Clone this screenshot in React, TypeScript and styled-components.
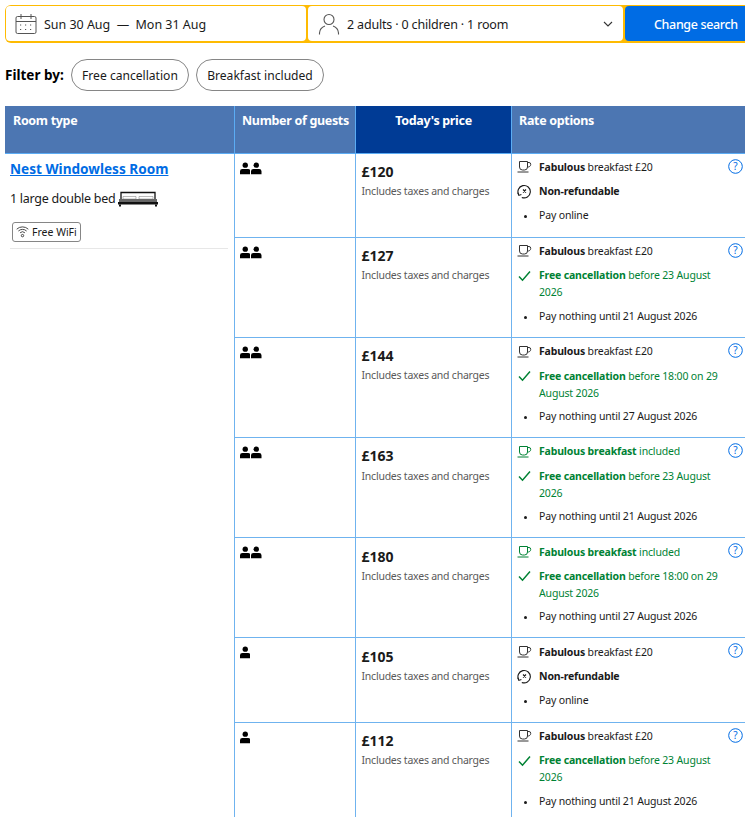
import React from "react";
import styled, { createGlobalStyle } from "styled-components";

const Global = createGlobalStyle`
  html, body { margin: 0; padding: 0; background: #fff; overflow: hidden; height: 817px; width: 745px; }
  body { font-family: "Noto Sans", "Open Sans", "Liberation Sans", sans-serif; color: #1a1a1a; }
`;

const Page = styled.div`
  width: 745px;
  height: 817px;
  overflow: hidden;
  padding: 5px 0 0 5px;
  box-sizing: border-box;
`;

const SearchBar = styled.div`
  display: flex;
  width: 760px;
  height: 38px;
  background: #febb02;
  border-radius: 6px;
  padding: 1px 0 2px 1px;
  box-sizing: border-box;
  gap: 2px;
`;

const Field = styled.div<{ $w: number }>`
  width: ${(p) => p.$w}px;
  flex: none;
  background: #fff;
  border-radius: 4px;
  display: flex;
  align-items: center;
  box-sizing: border-box;
  font-size: 12.5px;
  color: #1a1a1a;
`;

const DateText = styled.span<{ $tight?: boolean }>`
  margin-left: 7px;
  padding-top: 1px;
  white-space: pre;
  letter-spacing: ${(p) => (p.$tight ? "-0.17px" : "-0.03px")};
`;

const Chevron = styled.svg`
  margin-left: auto;
  margin-right: 10px;
`;

const SearchButton = styled.div`
  flex: 1;
  background: #006ce4;
  color: #fff;
  font-size: 12.5px;
  font-weight: 500;
  letter-spacing: -0.35px;
  border-radius: 4px 0 0 4px;
  display: flex;
  align-items: center;
  padding: 1px 0 0 29px;
`;

const FilterRow = styled.div`
  display: flex;
  align-items: center;
  margin-top: 16px;
  height: 32px;
`;

const FilterLabel = styled.span`
  font-size: 13.5px;
  font-weight: 700;
  color: #000;
  width: 66px;
`;

const Pill = styled.span<{ $w: number }>`
  width: ${(p) => p.$w}px;
  height: 32px;
  box-sizing: border-box;
  border: 1px solid #868686;
  border-radius: 16px;
  display: flex;
  align-items: center;
  justify-content: center;
  font-size: 12.1px;
  margin-right: 7px;
`;

const Table = styled.table`
  margin-top: 15px;
  width: 760px;
  table-layout: fixed;
  border-collapse: collapse;
`;

const Th = styled.th<{ $dark?: boolean; $center?: boolean }>`
  background: ${(p) => (p.$dark ? "#003b95" : "#4c76b2")};
  color: #fff;
  font-size: 12.5px;
  font-weight: 700;
  letter-spacing: -0.32px;
  text-align: ${(p) => (p.$center ? "center" : "left")};
  vertical-align: top;
  padding: 6px 6.5px 6px 7.5px;
  height: 47px;
  box-sizing: border-box;
  border: 1px solid #5bacf4;
  border-top: none;
  line-height: 17px;
  white-space: nowrap;
  &:first-child { border-left: none; padding-left: 8px; }
`;

const Tr = styled.tr<{ $h: number }>`
  height: ${(p) => p.$h}px;
`;

const Td = styled.td`
  border: 1px solid #6fb3ef;
  vertical-align: top;
  padding: 0;
  box-sizing: border-box;
`;

const RoomCell = styled(Td)`
  border-left: none;
  border-bottom: none;
  padding: 6px 6px 0 5px;
`;

const RoomName = styled.a`
  display: block;
  color: #006ce4;
  font-size: 13.6px;
  font-weight: 700;
  text-decoration: underline;
  line-height: 18px;
`;

const BedLine = styled.div`
  display: flex;
  align-items: center;
  font-size: 12.5px;
  letter-spacing: -0.27px;
  margin-top: 12px;
  height: 18px;
  gap: 3px;
`;

const Chip = styled.span`
  display: inline-flex;
  align-items: center;
  gap: 3px;
  margin: 14px 0 0 2px;
  width: 69px;
  height: 20px;
  box-sizing: border-box;
  border: 1px solid #868686;
  border-radius: 3px;
  font-size: 10.5px;
  padding-left: 3px;
`;

const Rule = styled.div`
  border-bottom: 1px solid #e7e7e7;
  margin-top: 5px;
`;

const GuestCell = styled(Td)`
  padding: 8px 0 0 5px;
`;

const GuestIcons = styled.div`
  display: flex;
  gap: 1px;
`;

const PriceCell = styled(Td)<{ $o: number }>`
  padding: ${(p) => 8.4 + p.$o}px 0 0 6px;
`;

const Price = styled.div`
  font-size: 14px;
  font-weight: 700;
  line-height: 19px;
  color: #1a1a1a;
`;

const PriceNote = styled.div`
  font-size: 10.5px;
  letter-spacing: -0.23px;
  color: #595959;
  line-height: 15px;
  margin-top: 3.2px;
`;

const RateCell = styled(Td)<{ $o: number }>`
  position: relative;
  padding: ${(p) => 5.35 + p.$o}px 0 0 5px;
`;

const Help = styled.svg`
  position: absolute;
  top: 5px;
  left: 216px;
`;

const RateLine = styled.div<{ $green?: boolean }>`
  display: flex;
  font-size: 10.5px;
  letter-spacing: -0.16px;
  line-height: 17px;
  margin-bottom: 7.45px;
  color: ${(p) => (p.$green ? "#008234" : "#1a1a1a")};
  width: 212px;
  b { font-weight: 700; }
  &:last-child { margin-top: -0.95px; }
`;

const RateIcon = styled.span`
  width: 22.5px;
  flex: none;
  display: flex;
  justify-content: flex-start;
  height: 17px;
  align-items: center;
`;

const Dot = styled.span`
  width: 3px;
  height: 3px;
  border-radius: 50%;
  background: #1a1a1a;
  margin: 2px 0 0 7px;
`;

const Cup = ({ c }: { c: string }) => (
  <svg width="15" height="14" viewBox="0 0 15 14" fill="none" stroke={c} strokeWidth="1">
    <path d="M2.5 1.5h8v5.5a3 3 0 0 1-3 3h-2a3 3 0 0 1-3-3z" />
    <path d="M10.5 2.5h1.5a1.7 1.7 0 0 1 1.7 1.7v.3a2.5 2.5 0 0 1-3.4 2.3" />
    <path d="M.5 12h11" />
  </svg>
);

const NonRefund = () => (
  <svg width="15" height="15" viewBox="0 0 15 15" fill="none" stroke="#1a1a1a" strokeWidth="1.1">
    <path d="M1.8 10.8A6.2 6.2 0 1 1 4.8 13.4" />
    <path d="M.8 8.6l1 2.8 2.6-1" />
    <path d="M6 5.5l3 3M9 5.5l-3 3" />
  </svg>
);

const Check = () => (
  <svg width="13" height="12" viewBox="0 0 13 12" fill="none" stroke="#008234" strokeWidth="1.5" style={{ marginLeft: 1 }}>
    <path d="M1 6.5l3.5 3.7L12 1.5" />
  </svg>
);

const Person = () => (
  <svg width="10.5" height="13" viewBox="0 0 11 13" fill="#000">
    <circle cx="5.5" cy="3" r="2.8" />
    <path d="M0 12.5V9.5A2.5 2.5 0 0 1 2.5 7h6A2.5 2.5 0 0 1 11 9.5v3z" />
  </svg>
);

const Bed = () => (
  <svg width="40" height="16" viewBox="0 0 40 16">
    <path d="M3 8V1.5h34V8" fill="none" stroke="#111" strokeWidth="1.3" />
    <path d="M5 5.5h13V8H5zM21 5.5h14V8H21z" fill="#fff" stroke="#555" strokeWidth=".4" />
    <path d="M1 8h38v3H1z" fill="#666" />
    <path d="M0 11h40v2.5H0z" fill="#111" />
    <path d="M1 13.5h2v2H1zM37 13.5h2v2h-2z" fill="#111" />
  </svg>
);

const Wifi = () => (
  <svg width="13" height="13" viewBox="0 0 13 13" fill="none" stroke="#333" strokeWidth=".9">
    <path d="M.7 4.2a8.4 8.4 0 0 1 11.6 0" />
    <path d="M2.4 6a6 6 0 0 1 8.2 0" />
    <path d="M4.1 7.8a3.5 3.5 0 0 1 4.8 0" />
    <circle cx="6.5" cy="10.6" r="1.2" />
  </svg>
);

const Calendar = () => (
  <svg width="22" height="22" viewBox="0 0 22 22" fill="none" stroke="#555" strokeWidth="1" style={{ marginLeft: 9 }}>
    <rect x="1" y="3.5" width="20" height="17" rx="1.5" />
    <path d="M1 8.5h20M6 1v5M16 1v5" />
    <path d="M5 12h2M10 12h2M15 12h2M5 16.5h2M10 16.5h2M15 16.5h2" strokeDasharray="1.2 .8" />
  </svg>
);

const User = () => (
  <svg width="22" height="22" viewBox="0 0 22 22" fill="none" stroke="#555" strokeWidth="1.1" style={{ marginLeft: 10 }}>
    <circle cx="11" cy="6.5" r="5" />
    <path d="M1.5 21.5v-1.5a8 8 0 0 1 5.5-7M20.5 21.5v-1.5a8 8 0 0 0-5.5-7" />
  </svg>
);

type Rate = {
  breakfast: boolean;
  cancel: "none" | string;
  pay: string;
};

type Row = {
  h: number;
  o: number;
  people: number;
  price: string;
  rate: Rate;
};

const d23 = "before 23 August 2026";
const d29 = "before 18:00 on 29 August 2026";
const p21 = "Pay nothing until 21 August 2026";
const p27 = "Pay nothing until 27 August 2026";

const rows: Row[] = [
  { h: 84, o: 0, people: 2, price: "£120", rate: { breakfast: false, cancel: "none", pay: "Pay online" } },
  { h: 100, o: 0.1, people: 2, price: "£127", rate: { breakfast: false, cancel: d23, pay: p21 } },
  { h: 100, o: 0.3, people: 2, price: "£144", rate: { breakfast: false, cancel: d29, pay: p27 } },
  { h: 100, o: 0.5, people: 2, price: "£163", rate: { breakfast: true, cancel: d23, pay: p21 } },
  { h: 100, o: 0.7, people: 2, price: "£180", rate: { breakfast: true, cancel: d29, pay: p27 } },
  { h: 85, o: 0.8, people: 1, price: "£105", rate: { breakfast: false, cancel: "none", pay: "Pay online" } },
  { h: 100, o: 0, people: 1, price: "£112", rate: { breakfast: false, cancel: d23, pay: p21 } },
];

const RateInfo = ({ rate }: { rate: Rate }) => (
  <>
    <Help width="15" height="15" viewBox="0 0 15 15" fill="none">
      <circle cx="7.5" cy="7.5" r="6.8" stroke="#006ce4" strokeWidth="1" />
      <text x="7.5" y="11" textAnchor="middle" fontSize="10" fill="#006ce4" fontFamily="Noto Sans">?</text>
    </Help>
    {rate.breakfast ? (
      <RateLine $green>
        <RateIcon><Cup c="#008234" /></RateIcon>
        <span><b>Fabulous breakfast</b> included</span>
      </RateLine>
    ) : (
      <RateLine>
        <RateIcon><Cup c="#333" /></RateIcon>
        <span><b>Fabulous</b> breakfast £20</span>
      </RateLine>
    )}
    {rate.cancel === "none" ? (
      <RateLine>
        <RateIcon><NonRefund /></RateIcon>
        <b>Non-refundable</b>
      </RateLine>
    ) : (
      <RateLine $green>
        <RateIcon><Check /></RateIcon>
        <span><b>Free cancellation</b> {rate.cancel}</span>
      </RateLine>
    )}
    <RateLine>
      <RateIcon><Dot /></RateIcon>
      <span>{rate.pay}</span>
    </RateLine>
  </>
);

export default function App() {
  return (
    <Page>
      <Global />
      <SearchBar>
        <Field $w={300}>
          <Calendar />
          <DateText>Sun 30 Aug  —  Mon 31 Aug</DateText>
        </Field>
        <Field $w={315}>
          <User />
          <DateText $tight>2 adults · 0 children · 1 room</DateText>
          <Chevron width="10" height="6" viewBox="0 0 10 6" fill="none" stroke="#333" strokeWidth="1.1">
            <path d="M1 1l4 4 4-4" />
          </Chevron>
        </Field>
        <SearchButton>Change search</SearchButton>
      </SearchBar>
      <FilterRow>
        <FilterLabel>Filter by:</FilterLabel>
        <Pill $w={118}>Free cancellation</Pill>
        <Pill $w={128}>Breakfast included</Pill>
      </FilterRow>
      <Table>
        <colgroup>
          <col style={{ width: 229 }} />
          <col style={{ width: 121 }} />
          <col style={{ width: 156 }} />
          <col style={{ width: 254 }} />
        </colgroup>
        <thead>
          <tr>
            <Th>Room type</Th>
            <Th>Number of guests</Th>
            <Th $dark $center>Today's price</Th>
            <Th>Rate options</Th>
          </tr>
        </thead>
        <tbody>
          {rows.map((r, i) => (
            <Tr $h={r.h} key={r.price}>
              {i === 0 && (
                <RoomCell rowSpan={rows.length}>
                  <RoomName>Nest Windowless Room</RoomName>
                  <BedLine>1 large double bed <Bed /></BedLine>
                  <Chip><Wifi /> Free WiFi</Chip>
                  <Rule />
                </RoomCell>
              )}
              <GuestCell>
                <GuestIcons>
                  {Array.from({ length: r.people }).map((_, k) => (
                    <Person key={k} />
                  ))}
                </GuestIcons>
              </GuestCell>
              <PriceCell $o={r.o}>
                <Price>{r.price}</Price>
                <PriceNote>Includes taxes and charges</PriceNote>
              </PriceCell>
              <RateCell $o={r.o}>
                <RateInfo rate={r.rate} />
              </RateCell>
            </Tr>
          ))}
        </tbody>
      </Table>
    </Page>
  );
}
